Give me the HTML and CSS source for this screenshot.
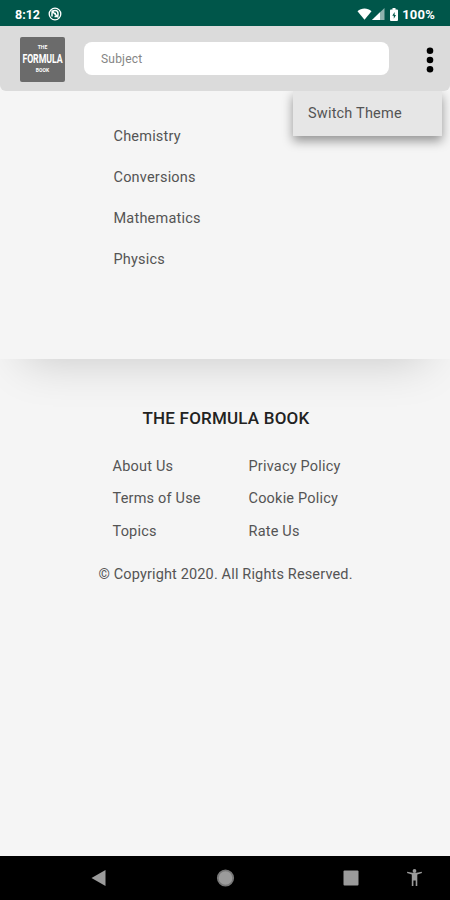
FILE: index.html
```html
<!DOCTYPE html>
<html lang="en">
<head>
  <meta charset="UTF-8" />
  <meta name="viewport" content="width=device-width, initial-scale=1.0"/>
  <title>The Formula Book</title>
  <link rel="stylesheet" href="styles.css">
</head>
<body>

<div class="status-bar">
  <span class="time">8:12</span>
  <svg class="status-app" width="14" height="14" viewBox="0 0 14 14" fill="none" stroke="#fff">
    <circle cx="7" cy="7" r="5.8" stroke-width="1.3"/>
    <path d="M4 9.5V6.5a3 3 0 0 1 6 0v1a2 2 0 0 1-2 2H6.5M3.5 3.5l7 7M6 6.5h2" stroke-width="1.5"/>
  </svg>
  <div class="status-icons">
    <svg width="15" height="12" viewBox="0 0 15 12" fill="#fff">
      <path d="M.5 3.2C4.5-.4 10.5-.4 14.5 3.2L7.5 11.7z"/>
    </svg>
    <svg width="13" height="12" viewBox="0 0 13 12">
      <path d="M0 12L12.5 0V12z" fill="#fff" opacity=".55"/>
      <path d="M0 12L8 4.3V12z" fill="#fff"/>
    </svg>
    <svg class="battery" width="8" height="13" viewBox="0 0 8 13">
      <path d="M2.5 0h3v1.5H7a1 1 0 0 1 1 1V12a1 1 0 0 1-1 1H1a1 1 0 0 1-1-1V2.5a1 1 0 0 1 1-1h1.5z" fill="#fff"/>
      <path d="M4.6 4L2.3 7.8h1.5v3L6 7H4.6z" fill="#00564a"/>
    </svg>
    <span class="percent">100%</span>
  </div>
</div>

<header class="header">
  <div class="logo">
    <span class="logo-small">THE</span>
    <span class="logo-big">FORMULA</span>
    <span class="logo-small">BOOK</span>
  </div>
  <input class="search" type="text" placeholder="Subject">
  <button class="menu-button" aria-label="Menu">
    <svg width="8" height="26" viewBox="0 0 8 26">
      <circle cx="4" cy="3.7" r="3.3"/>
      <circle cx="4" cy="13" r="3.3"/>
      <circle cx="4" cy="22.3" r="3.3"/>
    </svg>
  </button>
  <div class="dropdown">
    <a class="dropdown-item">Switch Theme</a>
  </div>
</header>

<main class="subjects">
  <a>Chemistry</a>
  <a>Conversions</a>
  <a>Mathematics</a>
  <a>Physics</a>
</main>

<footer class="footer">
  <h2>THE FORMULA BOOK</h2>
  <div class="footer-links">
    <a>About Us</a>
    <a>Privacy Policy</a>
    <a>Terms of Use</a>
    <a>Cookie Policy</a>
    <a>Topics</a>
    <a>Rate Us</a>
  </div>
  <p class="copyright">© Copyright 2020. All Rights Reserved.</p>
</footer>

<nav class="nav-bar">
  <svg class="nav-icons" width="450" height="44" viewBox="0 0 450 44" fill="#9b9b9b">
    <path d="M91.5 22L105.5 14v16z"/>
    <circle cx="225.5" cy="22" r="7.7" stroke="#777" stroke-width="1.8"/>
    <rect x="343.5" y="14.5" width="15" height="15" rx="1"/>
    <circle cx="414.5" cy="15" r="1.9"/>
    <path d="M407 17l.3-1.2q7.2 2.2 14.4 0L422 17l-4.7 1.4V30h-1.600v-5.5h-2.3V30h-1.600V18.4z"/>
  </svg>
</nav>

</body>
</html>
```

FILE: styles.css
```css
* {
  box-sizing: border-box;
}

body {
  font-family: Roboto, sans-serif;
  font-size: 14.5px;
  letter-spacing: 0.2px;
  color: #545454;
  background-color: #f5f5f5;
  margin: 0;
  height: 900px;
  display: flex;
  flex-direction: column;
  overflow: hidden;
}

.status-bar {
  display: flex;
  align-items: center;
  height: 26px;
  padding: 2px 15px 0;
  background-color: #00564a;
  color: #fff;
  font-size: 12.5px;
  font-weight: 700;
  letter-spacing: 0;
}

.time {
  width: 33px;
}

.status-icons {
  display: flex;
  align-items: center;
  margin-left: auto;
}

.battery {
  margin: 0 4px 0 5px;
}

.percent {
  font-size: 13px;
  letter-spacing: 0.2px;
}

.header {
  position: relative;
  display: flex;
  align-items: center;
  height: 65px;
  padding: 0 16px 0 20px;
  background-color: #dbdbdb;
  border-radius: 0 0 6px 6px;
}

.logo {
  display: flex;
  flex-direction: column;
  align-items: center;
  justify-content: center;
  gap: 1px;
  width: 45px;
  height: 45px;
  margin-top: 1px;
  border-radius: 2px;
  background-color: #6b6b6b;
  color: #fff;
  font-weight: 700;
  letter-spacing: 0;
}

.logo-small {
  font-size: 5px;
  line-height: 9px;
}

.logo-big {
  font-size: 12px;
  line-height: 12px;
  letter-spacing: -0.1px;
  transform: scaleX(0.73);
}

.search {
  width: 305px;
  height: 33px;
  margin-left: 19px;
  padding: 0 17px;
  border: none;
  border-radius: 8px;
  background-color: #fff;
  font-family: inherit;
  font-size: 12px;
  letter-spacing: 0.2px;
}

.search::placeholder {
  color: #858585;
}

.menu-button {
  display: flex;
  margin: 3px 0 0 auto;
  padding: 0;
  border: none;
  background: none;
}

.dropdown {
  position: absolute;
  top: 65px;
  right: 8px;
  width: 149px;
  height: 45px;
  padding: 14px 15px;
  background-color: #e6e6e6;
  box-shadow: 0 5px 10px rgba(0, 0, 0, 0.4);
  clip-path: inset(0 -20px -30px -20px);
}

.dropdown-item {
  display: block;
  line-height: 18px;
}

.subjects {
  display: flex;
  flex-direction: column;
  gap: 24px;
  height: 268px;
  padding: 37px 113.5px 0;
  line-height: 17px;
  box-shadow: 0 26px 44px -24px rgba(0, 0, 0, 0.18);
  clip-path: inset(0 0 -60px 0);
}

.footer {
  flex: 1;
  text-align: center;
}

.footer h2 {
  margin: 49px 0 0 2px;
  color: #222;
  font-size: 17px;
  font-weight: 500;
  letter-spacing: 0.2px;
  line-height: 20px;
}

.footer-links {
  display: grid;
  grid-template-columns: 136px auto;
  row-gap: 15.5px;
  margin: 29.5px 0 0 112.5px;
  line-height: 17px;
  text-align: left;
}

.copyright {
  margin: 26px 0 0 1px;
  line-height: 17px;
  letter-spacing: 0.15px;
}

.nav-bar {
  height: 44px;
  background-color: #000;
}

.nav-icons {
  display: block;
}
```
